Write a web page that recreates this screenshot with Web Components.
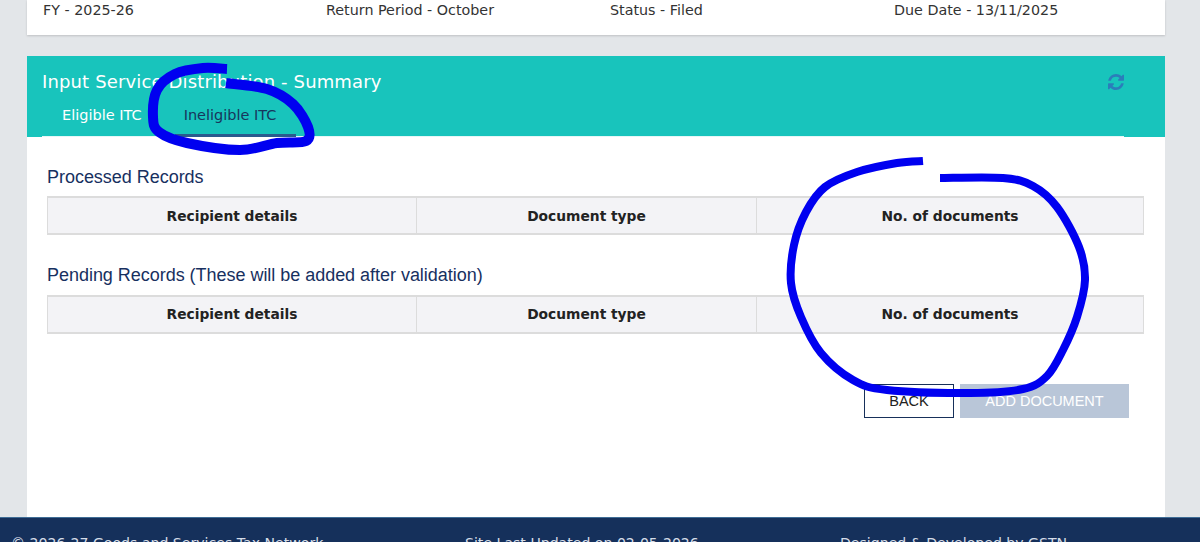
<!DOCTYPE html>
<html lang="en">
<head>
<meta charset="utf-8">
<title>Input Service Distribution - Summary</title>
<style>
    html, body { margin: 0; height: 542px; overflow: hidden; background: #e3e6e9; }
    body { display: flex; flex-direction: column; font-family: "DejaVu Sans", sans-serif; position: relative; }
</style>
</head>
<body>
<return-info>
    <span>FY - 2025-26</span>
    <span>Return Period - October</span>
    <span>Status - Filed</span>
    <span>Due Date - 13/11/2025</span>
</return-info>
<summary-panel title-text="Input Service Distribution - Summary">
    <records-table heading="Processed Records"></records-table>
    <records-table heading="Pending Records (These will be added after validation)"></records-table>
</summary-panel>
<site-footer></site-footer>
<pen-marks></pen-marks>

<script>
class ReturnInfo extends HTMLElement {
    constructor() {
        super();
        this.attachShadow({ mode: 'open' });
        this.shadowRoot.innerHTML = `
            <style>
                :host {
                    display: block;
                    height: 35px;
                    margin: 0 35px 0 27px;
                    padding-left: 16px;
                    box-sizing: border-box;
                    background: #fff;
                    box-shadow: 0 1px 2px rgba(0,0,0,0.16);
                    color: #333;
                    font-size: 14.3px;
                }
                .row {
                    display: grid;
                    grid-template-columns: 283px repeat(3, 284px);
                    line-height: 20px;
                }
            </style>
            <div class="row"><slot></slot></div>
        `;
    }
}

class SummaryPanel extends HTMLElement {
    constructor() {
        super();
        this.attachShadow({ mode: 'open' });
        this.shadowRoot.innerHTML = `
            <style>
                :host {
                    display: block;
                    height: 461px;
                    margin: 21px 35px 0 27px;
                    background: #fff;
                }
                .band {
                    height: 81px;
                    box-sizing: border-box;
                    padding: 15px 41px 0 15px;
                    background: #18c4bc;
                }
                .top {
                    display: flex;
                    justify-content: space-between;
                    align-items: center;
                    height: 20px;
                }
                h2 {
                    margin: 0;
                    font-size: 18px;
                    font-weight: 400;
                    color: #fff;
                    letter-spacing: 0.14px;
                }
                svg { display: block; width: 16px; height: 16px; fill: #2b7dba; position: relative; top: 1px; }
                .tabs {
                    display: flex;
                    height: 29px;
                    margin-top: 16px;
                    border-bottom: 1px solid #e6f7f6;
                    font-size: 14.5px;
                }
                .tab {
                    height: 29px;
                    box-sizing: border-box;
                    line-height: 17px;
                    color: #fff;
                    padding: 0 20px;
                }
                .tab.active {
                    margin-left: 13px;
                    padding: 0 20px 0 9px;
                    color: #17365d;
                    border-bottom: 3px solid #2a5a8e;
                    height: 30px;
                }
                .body { padding: 28.6px 21px 0 20px; }
                .actions {
                    display: flex;
                    justify-content: flex-end;
                    gap: 6px;
                    margin: 50px 15px 0 0;
                }
                button {
                    height: 34px;
                    box-sizing: border-box;
                    font: 14.5px "Liberation Sans", Arial, sans-serif;
                    cursor: pointer;
                }
                .back { width: 90px; background: #fff; color: #222; border: 1px solid #17305a; }
                .add { width: 169px; background: #b9c6d8; color: #fff; border: 0; }
            </style>
            <div class="band">
                <div class="top">
                    <h2></h2>
                    <svg viewBox="0 0 1536 1536" aria-hidden="true"><path d="M1511 928q0 5-1 7-64 268-268 434.5t-478 166.5q-146 0-282.5-55t-243.5-157l-129 129q-19 19-45 19t-45-19-19-45v-448q0-26 19-45t45-19h448q26 0 45 19t19 45-19 45l-137 137q71 66 161 102t187 36q134 0 250-65t186-179q11-17 53-117 8-23 30-23h192q13 0 22.5 9.5t9.5 22.5zm25-800v448q0 26-19 45t-45 19h-448q-26 0-45-19t-19-45 19-45l138-138q-148-137-349-137-134 0-250 65t-186 179q-11 17-53 117-8 23-30 23h-199q-13 0-22.5-9.5t-9.5-22.5v-7q65-268 270-434.5t480-166.5q146 0 284 55.5t245 156.5l130-129q19-19 45-19t45 19 19 45z"/></svg>
                </div>
                <div class="tabs">
                    <div class="tab">Eligible ITC</div>
                    <div class="tab active">Ineligible ITC</div>
                </div>
            </div>
            <div class="body">
                <slot></slot>
                <div class="actions">
                    <button class="back">BACK</button>
                    <button class="add" disabled>ADD DOCUMENT</button>
                </div>
            </div>
        `;
    }

    connectedCallback() {
        this.shadowRoot.querySelector('h2').textContent = this.getAttribute('title-text');
    }
}

class RecordsTable extends HTMLElement {
    constructor() {
        super();
        this.attachShadow({ mode: 'open' });
        this.shadowRoot.innerHTML = `
            <style>
                :host { display: block; margin-bottom: 28.7px; }
                h3 {
                    margin: 0 0 8.8px;
                    font: 400 18px/22px "Liberation Sans", Arial, sans-serif;
                    color: #17305f;
                    letter-spacing: -0.03px;
                }
                .head {
                    display: grid;
                    grid-template-columns: 369px 340px 1fr;
                    height: 39px;
                    box-sizing: border-box;
                    background: #f3f3f6;
                    border: 1px solid #dcdcdc;
                    border-top-width: 2px;
                    border-bottom-width: 2px;
                    font-size: 13.8px;
                    font-weight: 700;
                    color: #222;
                }
                .head div {
                    display: flex;
                    align-items: center;
                    justify-content: center;
                    border-right: 1px solid #dcdcdc;
                }
                .head div:last-child { border-right: 0; }
            </style>
            <h3></h3>
            <div class="head">
                <div>Recipient details</div>
                <div>Document type</div>
                <div>No. of documents</div>
            </div>
        `;
    }

    connectedCallback() {
        this.shadowRoot.querySelector('h3').textContent = this.getAttribute('heading');
    }
}

class SiteFooter extends HTMLElement {
    constructor() {
        super();
        this.attachShadow({ mode: 'open' });
        this.shadowRoot.innerHTML = `
            <style>
                :host {
                    display: block;
                    height: 25px;
                    overflow: hidden;
                    background: #15305b;
                    border-top: 1px solid #3f6d96;
                    box-sizing: border-box;
                    color: #d5dde8;
                    font-size: 14.1px;
                }
                .row {
                    display: grid;
                    grid-template-columns: 454px 375px 1fr;
                    padding: 15px 0 0 11px;
                    line-height: 20px;
                    white-space: nowrap;
                }
            </style>
            <div class="row">
                <span>© 2026-27 Goods and Services Tax Network</span>
                <span>Site Last Updated on 02-05-2026</span>
                <span>Designed &amp; Developed by GSTN</span>
            </div>
        `;
    }
}

// hand drawn marks that lie over the screenshot
class PenMarks extends HTMLElement {
    constructor() {
        super();
        this.attachShadow({ mode: 'open' });
        this.shadowRoot.innerHTML = `
            <style>
                :host { position: absolute; left: 0; top: 0; width: 1200px; height: 542px; pointer-events: none; }
                svg { display: block; }
                path { fill: none; stroke: #0000f0; stroke-linejoin: round; }
            </style>
            <svg width="1200" height="542" viewBox="0 0 1200 542">
                <path id="tab" stroke-width="10"></path>
                <path id="big" stroke-width="8"></path>
            </svg>
        `;
    }

    connectedCallback() {
        this.shadowRoot.getElementById('tab').setAttribute('d', this.smooth([
            [227,69],[203,68],[175,74],[157,90],[153,117],[159,132],[187,143],[240,150],
            [277,143],[306,141],[308,127],[293,104],[267,89],[226,83]
        ]));
        this.shadowRoot.getElementById('big').setAttribute('d', this.smooth([
            [923,161],[897,163],[857,172],[825,187],[806,212],[794,245],[791,283],[801,317],
            [821,353],[853,380],[887,390],[970,393],[1023,389],[1047,376],[1063,350],[1077,317],
            [1085,280],[1079,247],[1057,207],[1033,186],[1003,178],[940,178]
        ]));
    }

    smooth(pts) {
        let d = `M${pts[0][0]} ${pts[0][1]}`;
        for (let i = 0; i < pts.length - 1; i++) {
            const a = pts[i - 1] || pts[i], b = pts[i], c = pts[i + 1], e = pts[i + 2] || c;
            const c1 = [b[0] + (c[0] - a[0]) / 6, b[1] + (c[1] - a[1]) / 6];
            const c2 = [c[0] - (e[0] - b[0]) / 6, c[1] - (e[1] - b[1]) / 6];
            d += `C${c1[0]} ${c1[1]} ${c2[0]} ${c2[1]} ${c[0]} ${c[1]}`;
        }
        return d;
    }
}

customElements.define('return-info', ReturnInfo);
customElements.define('summary-panel', SummaryPanel);
customElements.define('records-table', RecordsTable);
customElements.define('site-footer', SiteFooter);
customElements.define('pen-marks', PenMarks);
</script>
</body>
</html>
